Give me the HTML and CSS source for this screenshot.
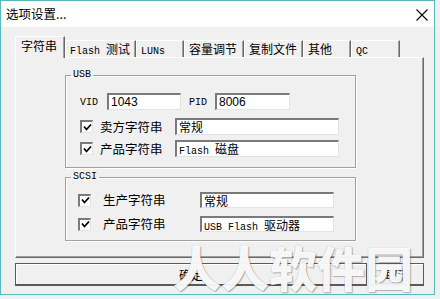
FILE: index.html
```html
<!DOCTYPE html>
<html>

<head>
<meta charset="utf-8">
<link rel="stylesheet" href="styles.css">
</head>

<body>
  <div class="window">
    <div class="titlebar">
      <span class="title">选项设置...</span>
      <svg class="close" width="12" height="12" viewBox="0 0 12 12">
        <path d="M0.5 0.5 L11.5 11.5 M11.5 0.5 L0.5 11.5" stroke="#000" stroke-width="1.1" fill="none"/>
      </svg>
    </div>

    <div class="content">
      <!-- tab strip -->
      <div class="tabs">
        <div class="tab active t1">字符串</div>
        <div class="tab t2"><span class="lat">Flash&nbsp;</span>测试</div>
        <div class="tab t3"><span class="lat">LUNs</span></div>
        <div class="tab t4">容量调节</div>
        <div class="tab t5">复制文件</div>
        <div class="tab t6">其他</div>
        <div class="tab t7"><span class="lat">QC</span></div>
      </div>

      <div class="panel">
        <fieldset class="group usb">
          <legend class="lat">USB</legend>
          <div class="row first">
            <span class="lbl lat vid">VID</span>
            <span class="field num w-vid">1043</span>
            <span class="lbl lat pid">PID</span>
            <span class="field num w-pid">8006</span>
          </div>
          <div class="row gap8">
            <span class="check"><svg width="9" height="9" viewBox="0 0 9 9"><path d="M1 3.5 L3.5 6.5 L8 1.5" stroke="#000" stroke-width="1.8" fill="none"/></svg></span>
            <span class="lbl cn usb-lbl">卖方字符串</span>
            <span class="field w-usb">常规</span>
          </div>
          <div class="row gap5">
            <span class="check"><svg width="9" height="9" viewBox="0 0 9 9"><path d="M1 3.5 L3.5 6.5 L8 1.5" stroke="#000" stroke-width="1.8" fill="none"/></svg></span>
            <span class="lbl cn usb-lbl">产品字符串</span>
            <span class="field w-usb"><span class="lat">Flash&nbsp;</span>磁盘</span>
          </div>
        </fieldset>

        <fieldset class="group scsi">
          <legend class="lat">SCSI</legend>
          <div class="row short">
            <span class="check"><svg width="9" height="9" viewBox="0 0 9 9"><path d="M1 3.5 L3.5 6.5 L8 1.5" stroke="#000" stroke-width="1.8" fill="none"/></svg></span>
            <span class="lbl cn scsi-lbl">生产字符串</span>
            <span class="field w-scsi">常规</span>
          </div>
          <div class="row short gap8">
            <span class="check"><svg width="9" height="9" viewBox="0 0 9 9"><path d="M1 3.5 L3.5 6.5 L8 1.5" stroke="#000" stroke-width="1.8" fill="none"/></svg></span>
            <span class="lbl cn scsi-lbl">产品字符串</span>
            <span class="field w-scsi"><span class="lat">USB Flash&nbsp;</span>驱动器</span>
          </div>
        </fieldset>
      </div>

      <div class="buttons">
        <button class="btn ok">确定</button>
        <button class="btn cancel">取消</button>
      </div>
    </div>

    <div class="watermark">人人软件园</div>
  </div>
</body>
</html>
```

FILE: styles.css
```css
* {
  box-sizing: border-box;
}

body {
  margin: 0;
  background: #eef1f4;
  font-family: "Noto Sans CJK SC", "Liberation Sans", sans-serif;
  font-size: 12px;
  color: #000;
}

/* the dialog window */
.window {
  position: relative;
  width: 435px;
  height: 295px;
  border: 1px solid #5ab8b8;
  background: #f0f0f0;
  overflow: hidden;
}

.titlebar {
  height: 26px;
  background: #fff;
  display: flex;
  align-items: center;
  justify-content: space-between;
  padding: 0 6px 0 5px;
}

.title {
  font-size: 12.5px;
  line-height: 16px;
}

.close {
  margin-top: 1px;
}

.content {
  padding: 0 10px 0 14px;
}

/* Latin text in the bitmap-ish monospace look */
.lat {
  font-family: "Liberation Mono", "DejaVu Sans Mono", monospace;
  font-size: 10px;
}

/* tab strip */
.tabs {
  display: flex;
  align-items: flex-end;
  height: 21px;
  margin-top: 9px;
}

.tab {
  height: 17px;
  border-top: 1px solid #fff;
  border-left: 1px solid #fff;
  border-right: 1px solid #696969;
  box-shadow: inset -1px 0 #a0a0a0;
  padding-left: 4px;
  line-height: 15px;
  white-space: nowrap;
}

.tab.active {
  height: 22px;
  margin-bottom: -1px;
  position: relative;
  z-index: 1;
  background: #f0f0f0;
  padding-left: 5px;
  line-height: 17px;
}

.t1 { width: 50px; }
.t2 { width: 71px; }
.t3 { width: 48px; }
.t4 { width: 60px; }
.t5 { width: 59px; }
.t6 { width: 48px; }
.t7 { width: 49px; }

/* tab page */
.panel {
  height: 201px;
  width: 409px;
  border-top: 1px solid #fff;
  border-left: 1px solid #fff;
  border-right: 1px solid #696969;
  border-bottom: 1px solid #696969;
  box-shadow: inset -1px -1px #a0a0a0;
  padding: 11px 0 0 49px;
}

/* group boxes */
.group {
  width: 291px;
  margin: 0;
  border: 1px solid #a0a0a0;
  box-shadow: inset 1px 1px #fff, 1px 1px #fff;
  padding: 12px 0 10px 14px;
}

.group legend {
  padding: 0 2px;
  margin-left: -9px;
  line-height: 12px;
}

.scsi {
  margin-top: 3px;
  padding: 9px 0 8px 12px;
}

.scsi legend {
  margin-left: -7px;
}

.row {
  display: flex;
  align-items: center;
  height: 17px;
}

.row.short {
  height: 16px;
}

.gap8 { margin-top: 8px; }
.gap5 { margin-top: 5px; }

.lbl {
  line-height: 14px;
}

.vid { width: 27px; padding-top: 3px; }
.pid { width: 26px; margin-left: 8px; padding-top: 3px; }
.usb-lbl { width: 75px; margin-left: 7px; font-size: 12.5px; }
.scsi-lbl { width: 97px; margin-left: 12px; font-size: 12.5px; }

/* sunken edit boxes */
.field {
  height: 100%;
  background: #fff;
  border-top: 2px solid #7a7a7a;
  border-left: 2px solid #7a7a7a;
  border-right: 1px solid #e3e3e3;
  border-bottom: 1px solid #e3e3e3;
  padding-left: 2px;
  line-height: 14px;
  white-space: nowrap;
}

.num {
  font-family: "Liberation Sans", sans-serif;
  font-size: 12px;
}

.w-vid { width: 74px; }
.w-pid { width: 75px; }
.w-usb { width: 164px; }
.w-scsi { width: 134px; }

/* check boxes */
.check {
  width: 13px;
  height: 13px;
  background: #fff;
  border-top: 2px solid #7a7a7a;
  border-left: 2px solid #7a7a7a;
  border-right: 1px solid #e3e3e3;
  border-bottom: 1px solid #e3e3e3;
  display: flex;
  align-items: center;
  justify-content: center;
}

/* bottom buttons */
.buttons {
  display: flex;
  gap: 4px;
  margin-top: 5px;
}

.btn {
  height: 23px;
  background: #f0f0f0;
  border: 1px solid #5a5a5a;
  border-bottom-width: 2px;
  box-shadow: inset 1px 1px #fff;
  font-family: "Noto Sans CJK SC", sans-serif;
  font-size: 12px;
  padding: 0;
  color: #000;
}

.ok { width: 352px; }
.cancel { width: 53px; }

/* site watermark stamped over the picture */
.watermark {
  position: absolute;
  left: 172px;
  top: 239px;
  font-size: 48px;
  font-weight: 900;
  line-height: 52px;
  color: rgba(255, 255, 255, 0.95);
  text-shadow: 1px 1px 1px rgba(0, 0, 0, 0.25), 0 0 1px rgba(0, 0, 0, 0.3);
  white-space: nowrap;
}
```
